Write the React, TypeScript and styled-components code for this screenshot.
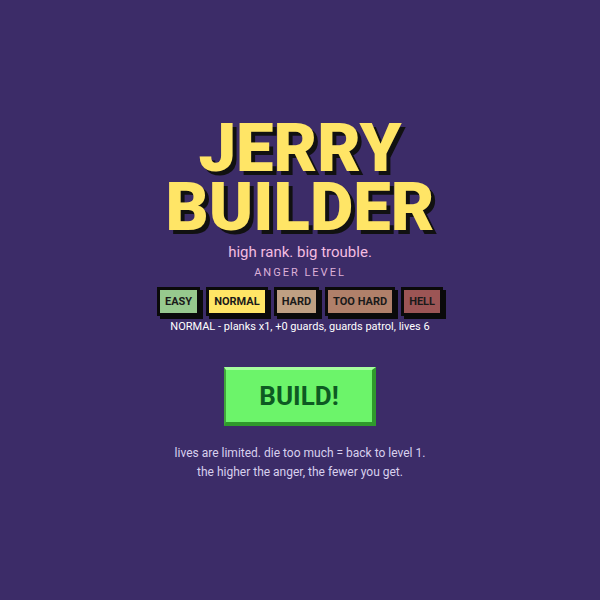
import styled, { createGlobalStyle } from "styled-components";

const GlobalStyle = createGlobalStyle`
  html, body {
    margin: 0;
    padding: 0;
    background: #3c2c68;
  }
  body {
    font-family: Roboto, "Liberation Sans", sans-serif;
  }
`;

const Screen = styled.div`
  width: 600px;
  height: 600px;
  display: flex;
  flex-direction: column;
  align-items: center;
  box-sizing: border-box;
  padding-top: 119px;
`;

const Title = styled.h1`
  margin: 0;
  font-size: 67px;
  font-weight: 900;
  line-height: 59px;
  color: #ffe566;
  text-align: center;
  text-shadow: 4px 4px 0 #111;
`;

const Tagline = styled.div`
  margin-top: 6px;
  font-size: 15px;
  color: #f4bde0;
`;

const SectionLabel = styled.div`
  margin-top: 5px;
  font-size: 11px;
  letter-spacing: 2px;
  color: #dcb0d8;
`;

const LevelRow = styled.div`
  display: flex;
  gap: 6px;
  margin-top: 8px;
`;

const LevelButton = styled.button<{ $bg: string }>`
  font-family: inherit;
  font-size: 11px;
  font-weight: 700;
  color: #1a1a1a;
  background: ${(p) => p.$bg};
  border: 3px solid #0a0a0a;
  box-shadow: 3px 3px 0 #0a0a0a;
  padding: 0 5px;
  height: 29px;
  cursor: pointer;
`;

const LevelInfo = styled.div`
  margin-top: 4px;
  font-size: 11px;
  color: #ffffff;
`;

const BuildButton = styled.button`
  margin-top: 34px;
  width: 152px;
  height: 59px;
  font-family: inherit;
  font-size: 26px;
  font-weight: 700;
  color: #0d5a22;
  background: #6cf46a;
  border: none;
  border-top: 3px solid #a6ff9e;
  border-left: 2px solid #3fa83b;
  border-right: 4px solid #2f9a2c;
  border-bottom: 4px solid #2f9a2c;
  cursor: pointer;
`;

const Hint = styled.p`
  margin: 18px 0 0;
  font-size: 12px;
  line-height: 19px;
  color: #d8d0ee;
  text-align: center;
`;

const LEVELS = [
  { name: "EASY", bg: "#97c98e" },
  { name: "NORMAL", bg: "#ffe566" },
  { name: "HARD", bg: "#bfa083" },
  { name: "TOO HARD", bg: "#b0806a" },
  { name: "HELL", bg: "#9c5555" },
];

export default function App() {
  return (
    <>
      <GlobalStyle />
      <Screen>
        <Title>
          JERRY
          <br />
          BUILDER
        </Title>
        <Tagline>high rank. big trouble.</Tagline>
        <SectionLabel>ANGER LEVEL</SectionLabel>
        <LevelRow>
          {LEVELS.map((lvl) => (
            <LevelButton key={lvl.name} $bg={lvl.bg}>
              {lvl.name}
            </LevelButton>
          ))}
        </LevelRow>
        <LevelInfo>NORMAL - planks x1, +0 guards, guards patrol, lives 6</LevelInfo>
        <BuildButton>BUILD!</BuildButton>
        <Hint>
          lives are limited. die too much = back to level 1.
          <br />
          the higher the anger, the fewer you get.
        </Hint>
      </Screen>
    </>
  );
}
